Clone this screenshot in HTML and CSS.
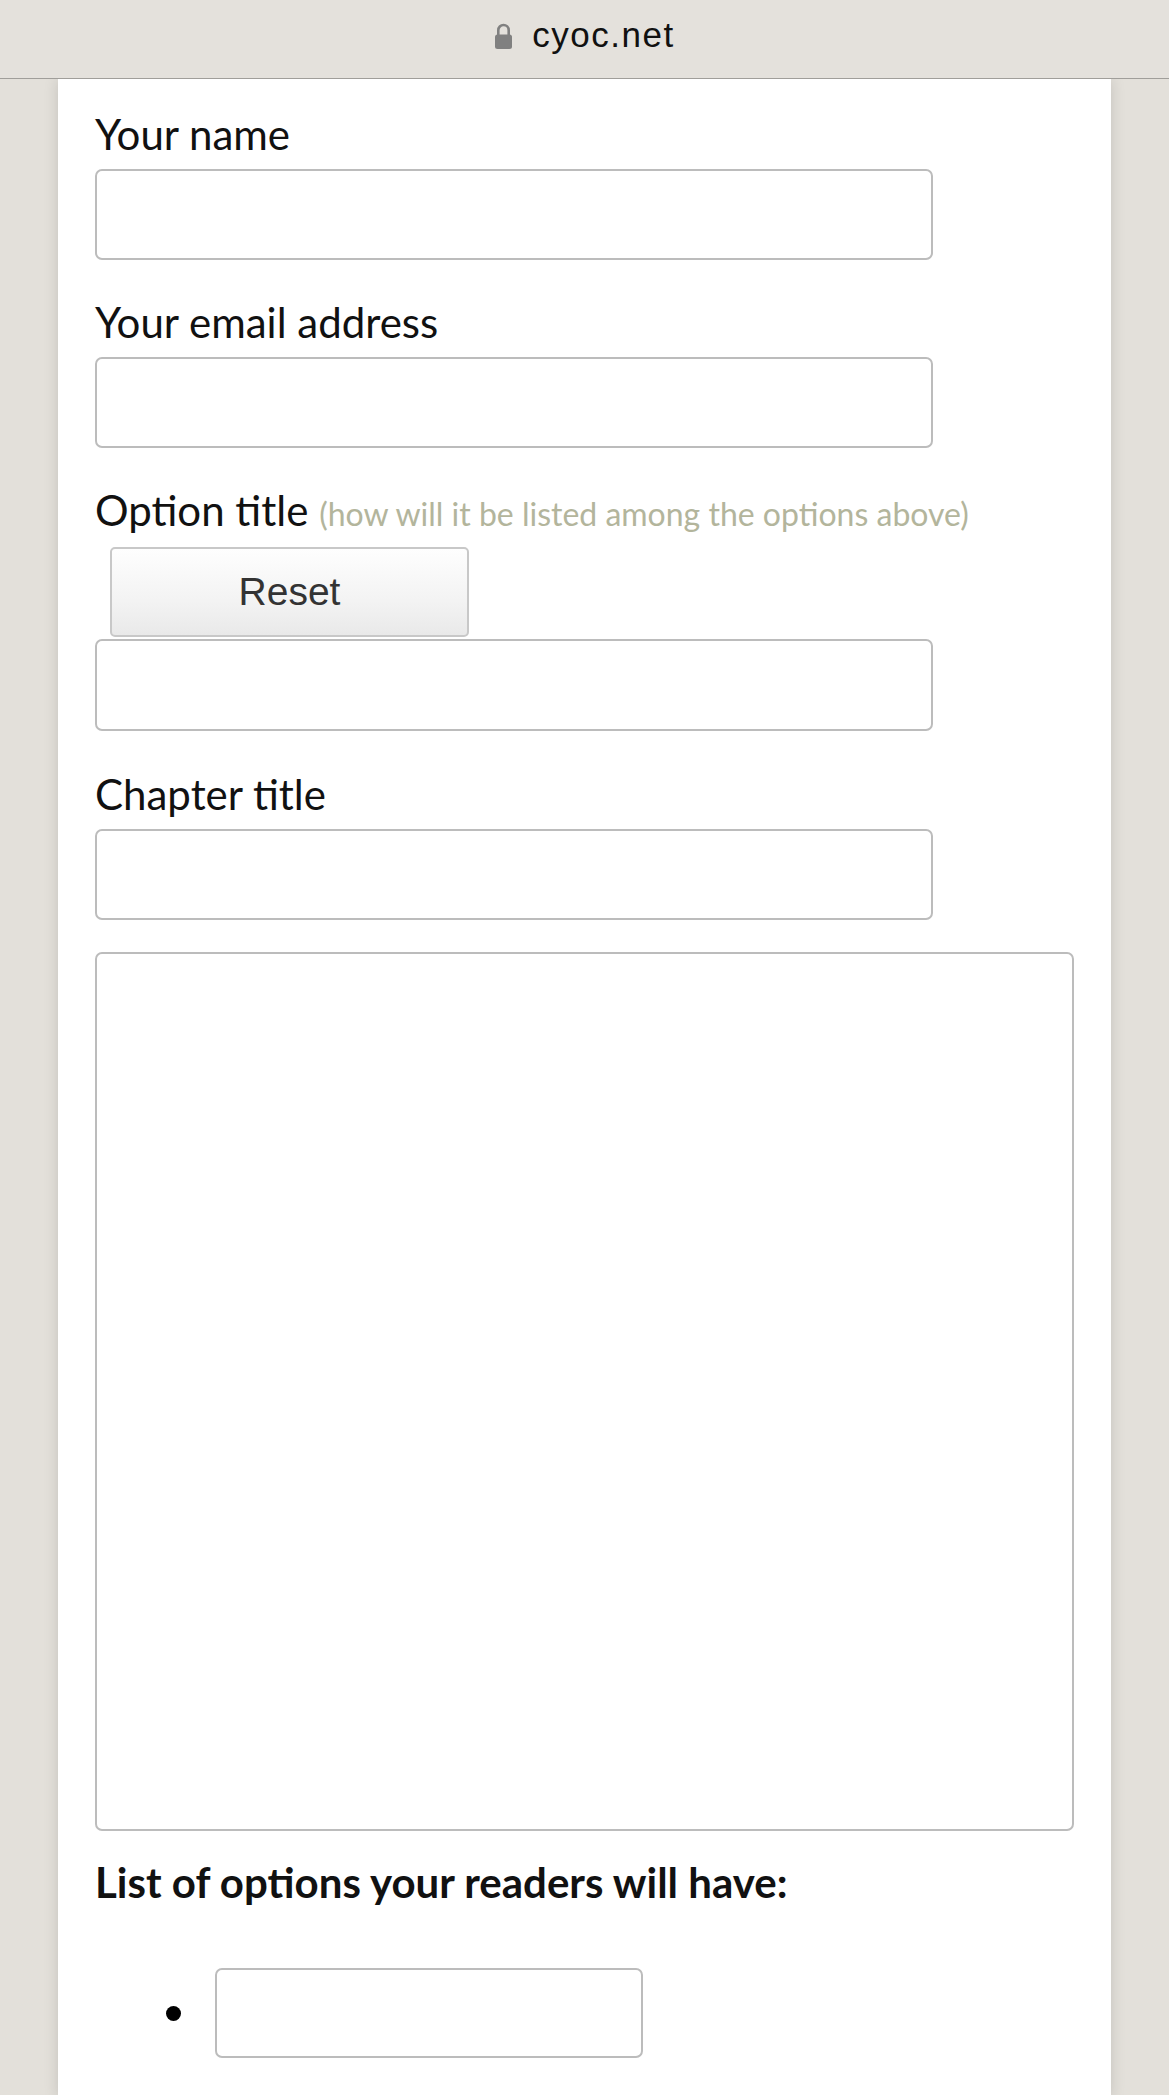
FILE: index.html
```html
<!DOCTYPE html>
<html lang="en">
<head>
<meta charset="utf-8">
<title>cyoc.net</title>
<link rel="stylesheet" href="styles.css">
</head>
<body>
<header class="topbar">
  <svg class="lock" width="19" height="26" viewBox="0 0 19 26" aria-hidden="true">
    <path d="M4.3 13 V7.2 a5.2 5.2 0 0 1 10.4 0 V13" fill="none" stroke="#808080" stroke-width="2.6"/>
    <rect x="1" y="11.5" width="17" height="14.5" rx="2.5" fill="#808080"/>
  </svg>
  <span class="host">cyoc.net</span>
</header>
<main class="panel">
  <div class="field">
    <label class="lbl" for="name">Your name</label>
    <input class="text" id="name" type="text">
  </div>
  <div class="field">
    <label class="lbl" for="email">Your email address</label>
    <input class="text" id="email" type="email">
  </div>
  <div class="field field-wide">
    <label class="lbl" for="opt">Option title <span class="note">(how will it be listed among the options above)</span></label>
    <button class="reset" type="button">Reset</button>
    <input class="text text-tight" id="opt" type="text">
  </div>
  <div class="field field-last">
    <label class="lbl" for="chap">Chapter title</label>
    <input class="text" id="chap" type="text">
  </div>
  <textarea class="body-text" aria-label="Chapter text"></textarea>
  <h2 class="list-head">List of options your readers will have:</h2>
  <ul class="opts">
    <li class="opt"><input class="text text-short" type="text" aria-label="Option 1"></li>
  </ul>
</main>
</body>
</html>
```

FILE: styles.css
```css
html, body {
  margin: 0;
  padding: 0;
}

body {
  background: #e3e0da;
  font-family: Lato, "Noto Sans", sans-serif;
  color: #111;
}

.topbar {
  position: relative;
  z-index: 1;
  box-sizing: border-box;
  height: 79px;
  padding-bottom: 8px;
  background: #e4e1dc;
  border-bottom: 1px solid #a09e9a;
  display: flex;
  justify-content: center;
  align-items: center;
  gap: 19px;
}

.lock {
  display: block;
  margin-top: 2px;
}

.host {
  font-family: "Liberation Sans", Arial, sans-serif;
  font-size: 35px;
  letter-spacing: 1.5px;
  color: #111;
}

.panel {
  box-sizing: border-box;
  width: 1053px;
  margin-left: 58px;
  min-height: calc(100vh - 79px);
  padding: 31px 37px 40px;
  background: #fff;
  box-shadow: 0 0 14px rgba(0, 0, 0, 0.14);
}

.field {
  margin-bottom: 38px;
}

.field-wide {
  margin-bottom: 39px;
}

.field-last {
  margin-bottom: 32px;
}

.lbl {
  display: block;
  font-size: 42px;
  line-height: 48px;
  height: 48px;
  margin-bottom: 11px;
  color: #111;
  white-space: nowrap;
}

.note {
  font-size: 32px;
  line-height: 1;
  color: #b3b59c;
}

.text {
  display: block;
  box-sizing: border-box;
  width: 838px;
  height: 91px;
  margin: 0;
  padding: 0 12px;
  border: 2px solid #bcbcbc;
  border-radius: 7px;
  background: #fff;
  font-family: Lato, sans-serif;
  font-size: 32px;
  outline: none;
}

.reset {
  display: block;
  box-sizing: border-box;
  width: 359px;
  height: 90px;
  margin: 0 0 2px 15px;
  padding: 0;
  border: 2px solid #c8c8c8;
  border-radius: 5px;
  background: linear-gradient(#fefefe, #f3f3f3 60%, #e9e9e9);
  font-family: "Liberation Sans", Arial, sans-serif;
  font-size: 39px;
  color: #333;
}

.field-wide .lbl {
  margin-bottom: 13px;
}

.text-tight {
  height: 92px;
}

.body-text {
  display: block;
  box-sizing: border-box;
  width: 979px;
  height: 879px;
  margin: 0;
  padding: 12px;
  border: 2px solid #bcbcbc;
  border-radius: 7px;
  background: #fff;
  resize: none;
  outline: none;
  font-family: Lato, sans-serif;
  font-size: 32px;
}

.list-head {
  margin: 27px 0 0;
  height: 48px;
  font-size: 42px;
  line-height: 48px;
  font-weight: 700;
  color: #111;
}

.opts {
  list-style: none;
  margin: 62px 0 0;
  padding: 0 0 0 71px;
}

.opt {
  display: flex;
  align-items: center;
  gap: 34px;
}

.opt::before {
  content: "";
  flex: none;
  width: 15px;
  height: 15px;
  border-radius: 50%;
  background: #000;
}

.text-short {
  width: 428px;
  height: 90px;
}
```
